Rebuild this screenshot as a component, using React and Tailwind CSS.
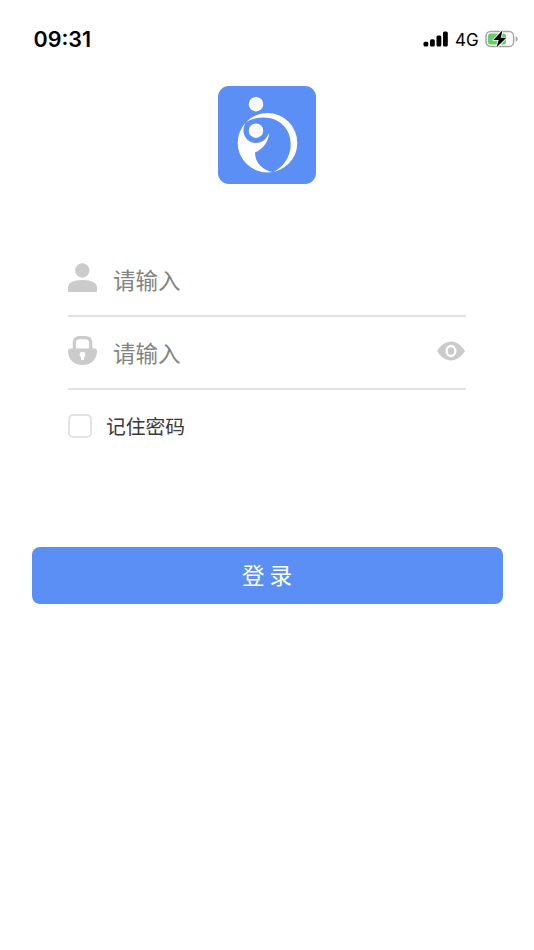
function StatusBar() {
  return (
    <header className="flex h-[86px] items-start justify-between pl-[33.5px] pr-4 pt-[25px] text-black">
      <span className="font-['Inter','Liberation_Sans',sans-serif] text-[21.5px] font-semibold leading-[29px]">
        09:31
      </span>
      <div className="flex h-7 items-center">
        <svg width="25" height="16" viewBox="0 0 25 16" fill="currentColor">
          <rect x="0.5" y="10.7" width="4.8" height="4.8" rx="1.5" />
          <rect x="7" y="8.3" width="4.8" height="7.2" rx="1.5" />
          <rect x="13.5" y="4.500" width="4.8" height="11" rx="1.5" />
          <rect x="20" y="0.6" width="4.8" height="14.9" rx="1.5" />
        </svg>
        <span className="ml-[7px] w-[30px] pt-0.5 font-['Inter','Liberation_Sans',sans-serif] text-[17px] leading-7">
          4G
        </span>
        <svg width="33" height="20" viewBox="0 0 33 20">
          <rect x="1" y="2.4" width="27.6" height="15" rx="4.5" fill="#fff" stroke="#a4a4a4" strokeWidth="1.5" />
          <path d="M30.600 7.300c1.500.5 2 1.400 2 2.600s-.5 2.100-2 2.600z" fill="#a4a4a4" />
          <rect x="3" y="4.4" width="18" height="11" rx="2.5" fill="#65ce68" />
          <path
            d="M17.500 1.300 8.300 11h5.400l-2.300 7.600 10-9.800h-5.600z"
            fill="#000"
            stroke="#fff"
            strokeWidth="1.6"
            paintOrder="stroke"
            strokeLinejoin="round"
          />
        </svg>
      </div>
    </header>
  )
}

function Logo() {
  return (
    <svg className="mx-auto block" width="98" height="98" viewBox="0 0 98 98">
      <rect width="98" height="98" rx="11" fill="#5b8ff6" />
      <circle cx="38" cy="18.2" r="7.2" fill="#fff" />
      <circle cx="49.5" cy="56.8" r="29.8" fill="#fff" />
      <path
        d="M25 38C31 33.500 39 31.500 46 31.500c15.500 0 26.700 11.500 26.700 26.500 0 12-6.500 22.500-17.400 28.200C44.500 84 37 77 37 66.500 45.500 62.500 50.500 56 51.200 46.500 48.500 53.500 44 57 38 57 30.500 57 25.500 51 25.500 44.500c0-3 .8-5.300 2-7.500z"
        fill="#5b8ff6"
      />
      <circle cx="38" cy="44.7" r="7.2" fill="#fff" />
    </svg>
  )
}

function UserIcon() {
  return (
    <svg width="29" height="30" viewBox="0 0 29 30" fill="#cbcbcb">
      <circle cx="14.3" cy="7.5" r="7.2" />
      <path d="M0 28v-3.500C0 20 5 17 14.500 17S29 20 29 24.500V28q0 1-1 1H1q-1 0-1-1z" />
    </svg>
  )
}

function LockIcon() {
  return (
    <svg width="29" height="30" viewBox="0 0 29 30">
      <path d="M6.300 14V7q0-5.300 5.200-5.300h6Q22.700 1.700 22.700 7v7" fill="none" stroke="#cbcbcb" strokeWidth="3.2" />
      <path d="M2.500 12.500h24q2.500 0 2.500 2.500C29 23 23.500 29 14.500 29S0 23 0 15q0-2.500 2.500-2.500z" fill="#cbcbcb" />
      <path d="M14.500 15.800a2.900 2.900 0 0 1 1.500 5.400V24h-3v-2.800a2.900 2.900 0 0 1 1.500-5.400z" fill="#fff" />
    </svg>
  )
}

function EyeIcon() {
  return (
    <svg width="28" height="20" viewBox="0 0 28 20">
      <path d="M0 10C4 4 8.500.5 14 .5S24 4 28 10c-4 6-8.500 9.500-14 9.500S4 16 0 10z" fill="#cbcbcb" />
      <ellipse cx="14" cy="10" rx="4.4" ry="5" fill="#cbcbcb" stroke="#fff" strokeWidth="2.3" />
    </svg>
  )
}

function Field({ icon, type, children }) {
  return (
    <label className="flex h-[73px] items-start border-b-2 border-[#e2e2e2] pt-[19px]">
      {icon}
      <input
        type={type}
        placeholder="请输入"
        className="-mt-px ml-4 h-[34px] min-w-0 flex-1 text-[22.5px] leading-[34px] outline-none placeholder:text-[#838383]"
      />
      {children}
    </label>
  )
}

export default function App() {
  return (
    <main className="min-h-[950px] bg-white font-['Noto_Sans_CJK_SC',sans-serif]">
      <StatusBar />
      <Logo />
      <form className="pt-[60px]" onSubmit={(e) => e.preventDefault()}>
        <div className="mx-[68px]">
          <Field icon={<UserIcon />} type="text" />
          <Field icon={<LockIcon />} type="password">
            <button type="button" className="mr-px mt-[5px]">
              <EyeIcon />
            </button>
          </Field>
          <label className="mt-5 flex h-8 items-center">
            <input
              type="checkbox"
              className="h-6 w-6 appearance-none rounded-[5px] border-2 border-[#e3e3e3] bg-white"
            />
            <span className="ml-3.5 text-[19.8px] leading-8 text-[#3a3a3a]">记住密码</span>
          </label>
        </div>
        <button
          type="submit"
          className="ml-[31.5px] mt-[105px] block h-[57px] w-[471px] rounded-lg bg-[#5b8ff6] pb-0.5 text-[22.5px] leading-[55px] text-white"
        >
          登 录
        </button>
      </form>
    </main>
  )
}
